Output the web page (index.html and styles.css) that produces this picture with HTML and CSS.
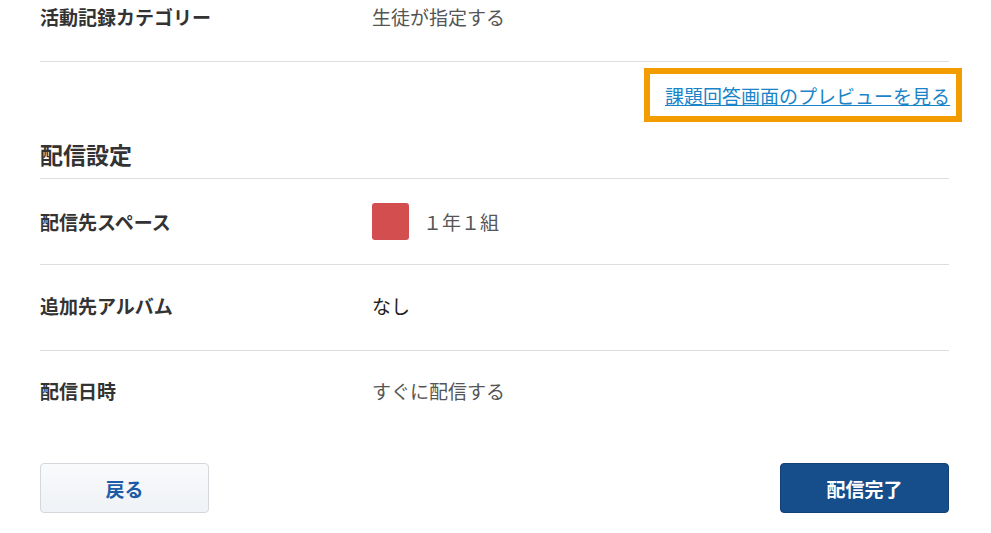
FILE: index.html
```html
<!DOCTYPE html>
<html lang="ja">
<head>
    <meta charset="UTF-8">
    <meta name="viewport" content="width=device-width, initial-scale=1.0">
    <title>配信確認</title>
    <link rel="stylesheet" href="styles.css">
</head>
<body>
    <div class="page">
        <div class="row row-first">
            <div class="label">活動記録カテゴリー</div>
            <div class="value">生徒が指定する</div>
        </div>

        <div class="preview">
            <div class="preview-box">
                <a href="#" class="preview-link">課題回答画面のプレビューを見る</a>
            </div>
        </div>

        <h2 class="section-title">配信設定</h2>

        <div class="row">
            <div class="label">配信先スペース</div>
            <div class="value space">
                <span class="space-color"></span>
                <span>１年１組</span>
            </div>
        </div>
        <div class="row row-album">
            <div class="label">追加先アルバム</div>
            <div class="value value-dark">なし</div>
        </div>
        <div class="row row-last">
            <div class="label">配信日時</div>
            <div class="value">すぐに配信する</div>
        </div>

        <div class="actions">
            <button type="button" class="btn btn-back">戻る</button>
            <button type="button" class="btn btn-submit">配信完了</button>
        </div>
    </div>
</body>
</html>
```

FILE: styles.css
```css
body{
    margin: 0;
    background: #fff;
    font-family: "Noto Sans CJK JP", "Noto Sans", sans-serif;
    color: #333;
}
.page{
    width: 909px;
    margin-left: 40px;
}
.row{
    display: flex;
    align-items: center;
    height: 85px;
    border-bottom: 1px solid #ddd;
}
.row-first{
    margin-top: -28px;
    height: 89px;
}
.row-album{
    padding-bottom: 4px;
    height: 81px;
}
.row-last{
    height: 80px;
    border-bottom: none;
}
.label{
    width: 332px;
    font-size: 19px;
    line-height: 28px;
    font-weight: bold;
    color: #333;
}
.value{
    font-size: 19px;
    line-height: 28px;
    color: #555;
}
.value-dark{
    color: #222;
}
.space{
    display: flex;
    align-items: center;
    gap: 14px;
}
.space-color{
    width: 37px;
    height: 37px;
    border-radius: 3px;
    background: #d24e4f;
}
.preview{
    display: flex;
    justify-content: flex-end;
    margin-top: 6px;
    margin-right: -13px;
}
.preview-box{
    display: flex;
    align-items: center;
    height: 42px;
    padding: 0 6px 0 15px;
    border: 6px solid #f29c00;
}
.preview-link{
    font-size: 19px;
    color: #1a84c8;
    text-decoration: underline;
}
.section-title{
    margin: 17px 0 0;
    padding-bottom: 8px;
    font-size: 23px;
    line-height: 31px;
    font-weight: bold;
    color: #333;
    border-bottom: 1px solid #ddd;
}
.actions{
    display: flex;
    justify-content: space-between;
    margin-top: 32px;
}
.btn{
    width: 169px;
    height: 50px;
    border-radius: 4px;
    font-family: inherit;
    font-size: 19px;
    font-weight: bold;
    cursor: pointer;
}
.btn-back{
    background: linear-gradient(#f9fafc, #eff2f6);
    border: 1px solid #d4d7db;
    color: #1c5ba6;
}
.btn-submit{
    background: #164d8b;
    border: 1px solid #123f74;
    color: #fff;
}
```
